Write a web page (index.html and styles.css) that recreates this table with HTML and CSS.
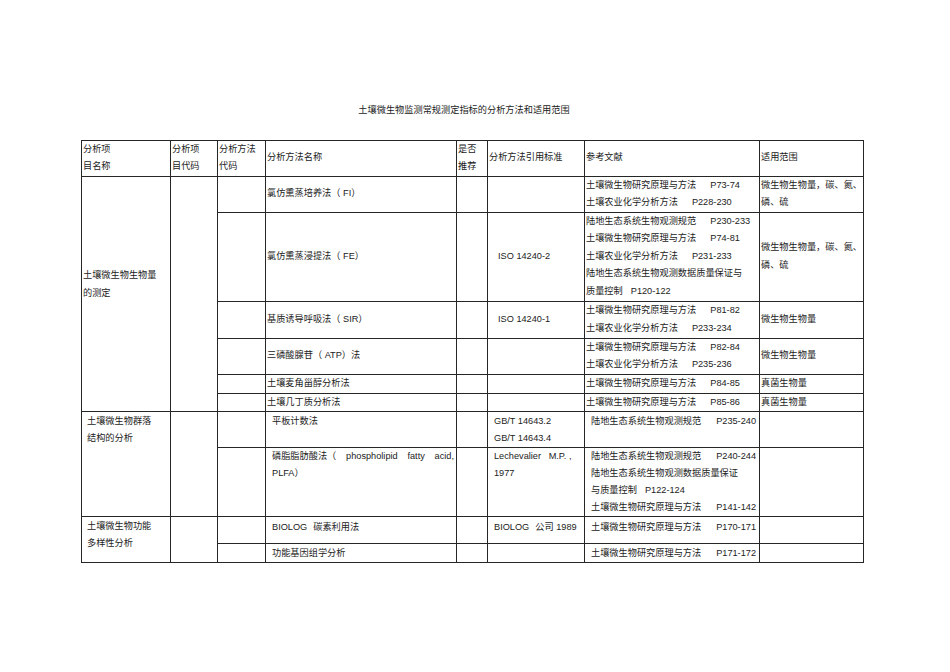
FILE: index.html
```html
<!DOCTYPE html>
<html lang="zh-CN">
<head>
<meta charset="utf-8">
<title>土壤微生物监测常规测定指标的分析方法和适用范围</title>
<link rel="stylesheet" href="styles.css">
</head>
<body>
<div class="page">
  <h1 class="title">土壤微生物监测常规测定指标的分析方法和适用范围</h1>
  <table class="spec">
    <colgroup>
      <col class="c1"><col class="c2"><col class="c3"><col class="c4"><col class="c5"><col class="c6"><col class="c7"><col class="c8">
    </colgroup>
    <tr class="r-head">
      <th>分析项<br>目名称</th>
      <th>分析项<br>目代码</th>
      <th>分析方法<br>代码</th>
      <th>分析方法名称</th>
      <th>是否<br>推荐</th>
      <th>分析方法引用标准</th>
      <th>参考文献</th>
      <th>适用范围</th>
    </tr>
    <tr class="r-fi">
      <td rowspan="6" class="grp-up">土壤微生物生物量<br>的测定</td>
      <td rowspan="6"></td>
      <td></td>
      <td>氯仿熏蒸培养法（ FI）</td>
      <td></td>
      <td></td>
      <td><div>土壤微生物研究原理与方法<span class="pg">P73-74</span></div><div>土壤农业化学分析方法<span class="pg">P228-230</span></div></td>
      <td><div class="just"><span>微生物生物量，</span><span>碳、</span><span>氮、</span></div><div>磷、硫</div></td>
    </tr>
    <tr class="r-fe">
      <td></td>
      <td>氯仿熏蒸浸提法（ FE）</td>
      <td></td>
      <td class="std-up">ISO 14240-2</td>
      <td><div>陆地生态系统生物观测规范<span class="pg">P230-233</span></div><div>土壤微生物研究原理与方法<span class="pg">P74-81</span></div><div>土壤农业化学分析方法<span class="pg">P231-233</span></div><div>陆地生态系统生物观测数据质量保证与</div><div>质量控制<span class="pg-s">P120-122</span></div></td>
      <td><div class="just"><span>微生物生物量，</span><span>碳、</span><span>氮、</span></div><div>磷、硫</div></td>
    </tr>
    <tr class="r-sir">
      <td></td>
      <td>基质诱导呼吸法（ SIR）</td>
      <td></td>
      <td class="std-up">ISO 14240-1</td>
      <td><div>土壤微生物研究原理与方法<span class="pg">P81-82</span></div><div>土壤农业化学分析方法<span class="pg">P233-234</span></div></td>
      <td>微生物生物量</td>
    </tr>
    <tr class="r-atp">
      <td></td>
      <td>三磷酸腺苷（ ATP）法</td>
      <td></td>
      <td></td>
      <td><div>土壤微生物研究原理与方法<span class="pg">P82-84</span></div><div>土壤农业化学分析方法<span class="pg">P235-236</span></div></td>
      <td>微生物生物量</td>
    </tr>
    <tr class="r-erg">
      <td></td>
      <td>土壤麦角甾醇分析法</td>
      <td></td>
      <td></td>
      <td><div>土壤微生物研究原理与方法<span class="pg">P84-85</span></div></td>
      <td>真菌生物量</td>
    </tr>
    <tr class="r-chit">
      <td></td>
      <td>土壤几丁质分析法</td>
      <td></td>
      <td></td>
      <td><div>土壤微生物研究原理与方法<span class="pg">P85-86</span></div></td>
      <td>真菌生物量</td>
    </tr>
    <tr class="r-plate low">
      <td rowspan="2" class="grp-low">土壤微生物群落<br>结构的分析</td>
      <td rowspan="2"></td>
      <td></td>
      <td class="name-low">平板计数法</td>
      <td></td>
      <td class="std-low">GB/T 14643.2<br>GB/T 14643.4</td>
      <td class="ref-low"><div class="just"><span>陆地生态系统生物观测规范</span><span>P235-240</span></div></td>
      <td></td>
    </tr>
    <tr class="r-plfa low">
      <td></td>
      <td class="name-low"><div class="just"><span>磷脂脂肪酸法（</span><span>phospholipid</span><span>fatty</span><span>acid,</span></div><div>PLFA）</div></td>
      <td></td>
      <td class="std-low">Lechevalier&nbsp;&nbsp;&nbsp;M.P. ,<br>1977</td>
      <td class="ref-low"><div class="just"><span>陆地生态系统生物观测规范</span><span>P240-244</span></div><div>陆地生态系统生物观测数据质量保证</div><div>与质量控制<span class="pg-s">P122-124</span></div><div class="just"><span>土壤微生物研究原理与方法</span><span>P141-142</span></div></td>
      <td></td>
    </tr>
    <tr class="r-bio low">
      <td rowspan="2" class="grp-low">土壤微生物功能<br>多样性分析</td>
      <td rowspan="2"></td>
      <td></td>
      <td class="name-low">BIOLOG<span class="gap">碳素利用法</span></td>
      <td></td>
      <td class="std-low">BIOLOG<span class="gap">公司</span> 1989</td>
      <td class="ref-low"><div class="just"><span>土壤微生物研究原理与方法</span><span>P170-171</span></div></td>
      <td></td>
    </tr>
    <tr class="r-gene">
      <td></td>
      <td class="name-low">功能基因组学分析</td>
      <td></td>
      <td></td>
      <td class="ref-low"><div class="just"><span>土壤微生物研究原理与方法</span><span>P171-172</span></div></td>
      <td></td>
    </tr>
  </table>
</div>
</body>
</html>
```

FILE: styles.css
```css
html, body {
  margin: 0;
  padding: 0;
  background: #ffffff;
}

body {
  color: #222222;
  font-family: "Liberation Sans", "Noto Sans CJK SC", sans-serif;
  font-size: 9.2px;
  line-height: 17.5px;
}

.page {
  padding: 102px 0 0 81px;
}

.title {
  margin: 0 0 20px 0;
  width: 782px;
  box-sizing: border-box;
  padding-right: 16px;
  font-size: 9.2px;
  font-weight: normal;
  line-height: 17.5px;
  text-align: center;
}

.spec {
  border-collapse: collapse;
  table-layout: fixed;
  width: 782px;
}

.c1 { width: 89px; }
.c2 { width: 47px; }
.c3 { width: 48px; }
.c4 { width: 191px; }
.c5 { width: 31px; }
.c6 { width: 97px; }
.c7 { width: 175px; }
.c8 { width: 104px; }

.spec th,
.spec td {
  border: 1px solid #262626;
  padding: 0 1px 0 1px;
  vertical-align: middle;
  text-align: left;
  font-weight: normal;
  white-space: nowrap;
  overflow: hidden;
}

.r-head { height: 36px; }
.r-fi { height: 36px; }
.r-fe { height: 89px; }
.r-sir { height: 37px; }
.r-atp { height: 36px; }
.r-erg { height: 19px; }
.r-chit { height: 18px; }
.r-plate { height: 36px; }
.r-plfa { height: 68px; }
.r-bio { height: 27px; }
.r-gene { height: 17px; }

.spec .grp-up {
  padding-bottom: 18px;
}

.pg {
  margin-left: 14px;
}

.pg-s {
  margin-left: 8px;
}

.gap {
  margin-left: 6px;
}

.just {
  display: flex;
  justify-content: space-between;
}

.spec .std-up {
  padding-left: 10px;
}

.spec .low td {
  vertical-align: top;
  padding-top: 1px;
  line-height: 17px;
}

.spec .r-plfa td {
  padding-top: 0;
}

.spec .r-bio td {
  padding-top: 2px;
}

.spec .r-gene td {
  line-height: 17px;
  padding-top: 1px;
}

.spec .grp-low {
  padding-left: 5px;
}

.spec td.grp-low {
  vertical-align: top;
  padding-top: 1px;
}

.spec .name-low {
  padding-left: 6px;
  padding-right: 2px;
}

.spec .std-low {
  padding-left: 6px;
}

.spec .ref-low {
  padding-left: 6px;
  padding-right: 3px;
}
```
